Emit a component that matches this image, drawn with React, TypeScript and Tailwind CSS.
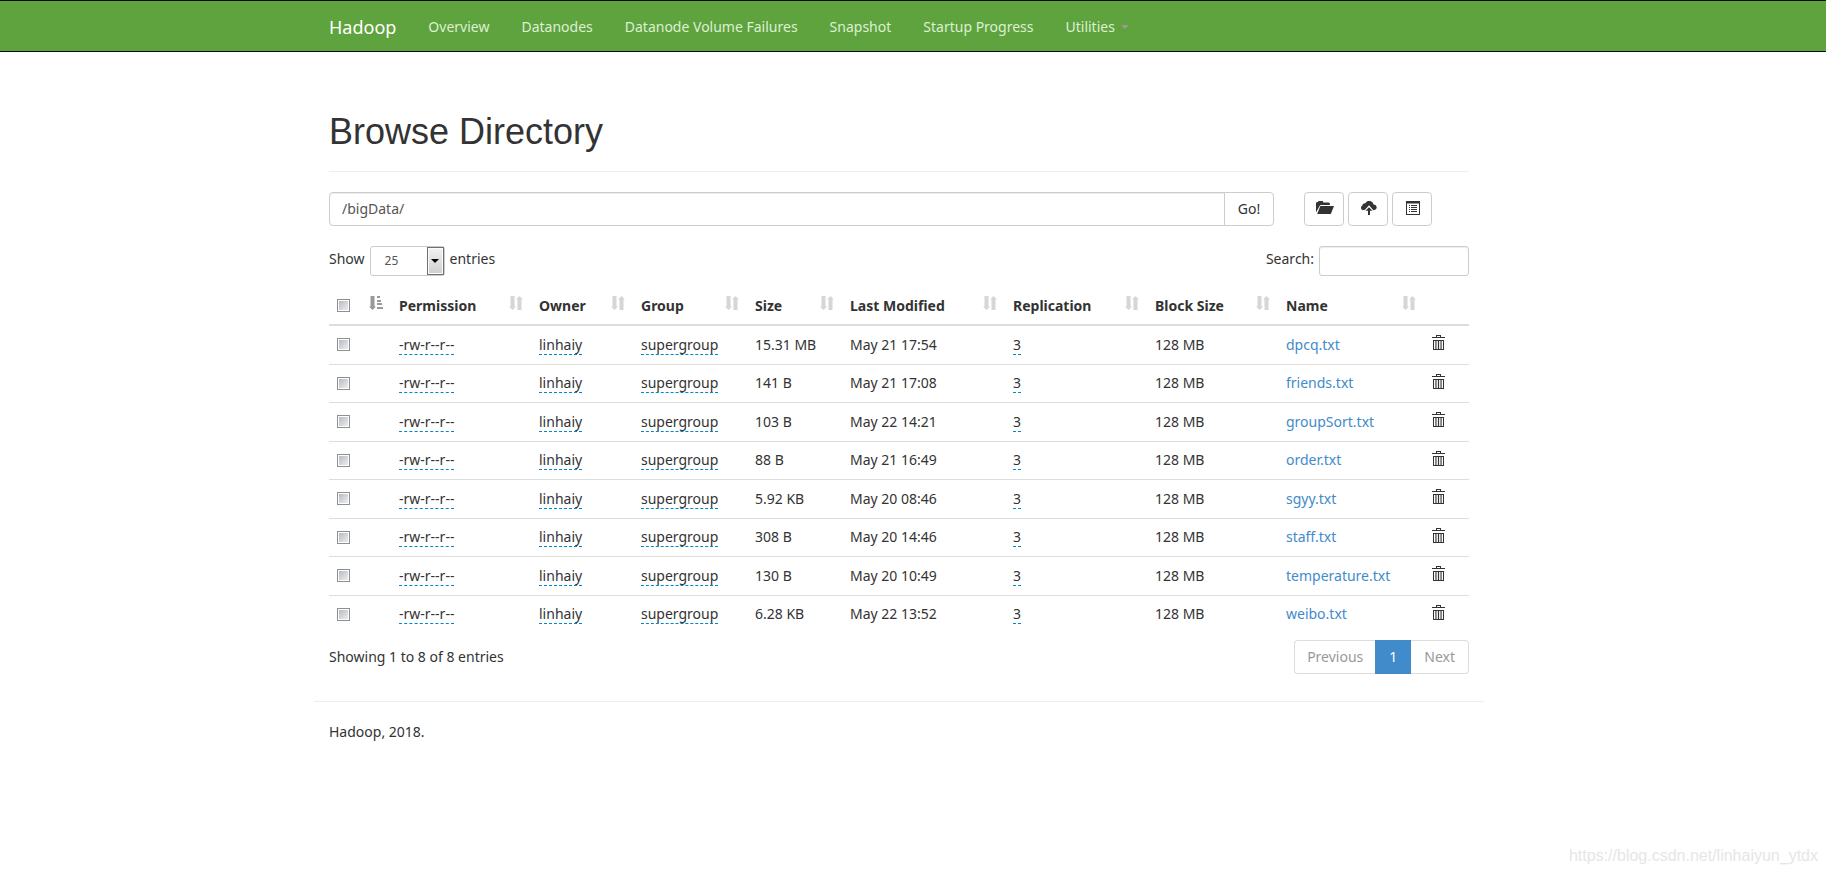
import React from "react";

const files = [
  ["15.31 MB", "May 21 17:54", "dpcq.txt"],
  ["141 B", "May 21 17:08", "friends.txt"],
  ["103 B", "May 22 14:21", "groupSort.txt"],
  ["88 B", "May 21 16:49", "order.txt"],
  ["5.92 KB", "May 20 08:46", "sgyy.txt"],
  ["308 B", "May 20 14:46", "staff.txt"],
  ["130 B", "May 20 10:49", "temperature.txt"],
  ["6.28 KB", "May 22 13:52", "weibo.txt"],
];

const columns = [
  { name: "Permission", width: "w-[140px]" },
  { name: "Owner", width: "w-[102px]" },
  { name: "Group", width: "w-[114px]" },
  { name: "Size", width: "w-[95px]" },
  { name: "Last Modified", width: "w-[163px]" },
  { name: "Replication", width: "w-[142px]" },
  { name: "Block Size", width: "w-[131px]" },
  { name: "Name", width: "w-[146px]" },
];

const navLinks = ["Overview", "Datanodes", "Datanode Volume Failures", "Snapshot", "Startup Progress"];

function SortIcon() {
  return (
    <svg viewBox="0 0 14 14" className="absolute right-2 bottom-3.5 size-3.5 fill-[#d6d6d6]" aria-hidden="true">
      <path d="M1.500 0h4v10.500H7L3.500 14 0 10.500h1.500zM8.500 14h4V3.500H14L10.500 0 7 3.500h1.500z" />
    </svg>
  );
}

function SortAscIcon() {
  return (
    <svg viewBox="0 0 14 14" className="absolute right-2 bottom-3.5 size-3.5 fill-[#999]" aria-hidden="true">
      <path d="M1.500 0h4v10.500H7L3.500 14 0 10.500h1.500zM8 0h3v2H8zM8 4h4v2H8zM8 7h5v2H8zM8 11h6v2H8z" />
    </svg>
  );
}

function FolderIcon() {
  return (
    <svg viewBox="0 0 18 14" className="h-3.5 w-[18px] fill-[#333]" aria-hidden="true">
      <path d="M0 11.500V2l1-1h1l.6-1h4l.8 1.500H13l.9.9V4H4.500L3.600 5z" />
      <path d="M4.300 5H18l-3.200 8H1.200z" />
    </svg>
  );
}

function UploadIcon() {
  return (
    <svg viewBox="0 0 16 14" className="h-3.5 w-4 fill-[#333]" aria-hidden="true">
      <path d="M4 8.800 1.900 9.200A2.500 2.500 0 0 1 1.400 4.500 2.400 2.400 0 0 1 4.400 2.300 4.300 4.300 0 0 1 12.500 3.400 2.900 2.900 0 0 1 14.200 8.800L12.400 9.200 8 4.300z" />
      <path d="M8 6.200 11.500 9.800H9V14H7V9.800H4.500z" />
    </svg>
  );
}

function ListIcon() {
  return (
    <svg viewBox="0 0 14 14" className="size-3.5 fill-[#333]" aria-hidden="true">
      <path fillRule="evenodd" d="M0 0h14v14H0zM1 2.500V13h12V2.500z" />
      <path d="M3 4h1v1H3zM5 4h6v1H5zM3 6h1v1H3zM5 6h6v1H5zM3 8h1v1H3zM5 8h6v1H5zM3 10h1v1H3zM5 10h6v1H5z" />
    </svg>
  );
}

function TrashIcon() {
  return (
    <svg viewBox="0 0 13 15" className="h-[15px] w-[13px] fill-[#333]" aria-hidden="true">
      <path
        fillRule="evenodd"
        d="M4 2V0h5v2h4v1H0V2zM5 1v1h3V1zM1 5h11v10H1zM2 6v8h1.400V6zM4.500 6v8h1.400V6zM7.100 6v8h1.400V6zM9.600 6v8H11V6z"
      />
    </svg>
  );
}

const checkbox =
  "block size-[13px] appearance-none border border-[#8e8f8f] bg-linear-to-br from-[#b0b6bf] to-[#f3f3f3] bg-clip-content p-px checked:from-[#428bca] checked:to-[#428bca]";
const editable = "inline-block border-b border-dashed border-[#0088cc] leading-[18px]";
const iconButton = "flex h-[34px] w-10 items-center justify-center rounded border border-[#ccc] bg-white pb-0.5 pl-0.5";

export default function App() {
  return (
    <div className="relative min-h-screen bg-white font-['Noto_Sans',sans-serif] text-sm leading-5 text-[#333]">
      <nav className="border-y border-[#080808] bg-[#5fa33e] pr-7">
        <div className="mx-auto flex h-[50px] max-w-[1170px] items-center px-[15px] pt-0.5">
          <a href="#" className="mr-4 text-lg leading-5 text-white">
            Hadoop
          </a>
          {navLinks.map((label) => (
            <a key={label} href="#" className="px-4 text-[#dcf0d3]">
              {label}
            </a>
          ))}
          <a href="#" className="flex items-center gap-1.5 px-4 text-[#dcf0d3]">
            Utilities
            <span className="border-x-4 border-t-4 border-x-transparent border-t-[#999]" />
          </a>
        </div>
      </nav>

      <div className="pr-7">
        <main className="mx-auto max-w-[1170px] px-[15px] pt-[60px]">
          <h1 className="border-b border-[#eee] pb-[19px] font-['Liberation_Sans',sans-serif] text-4xl leading-10">
            Browse Directory
          </h1>

          <div className="mt-5 flex">
            <input
              aria-label="Directory"
              defaultValue="/bigData/"
              className="h-[34px] min-w-0 flex-1 rounded-l border border-[#ccc] px-3 pb-0.5 text-[#555] shadow-[inset_0_1px_1px_rgba(0,0,0,0.075)]"
            />
            <button className="-ml-px h-[34px] w-[50px] rounded-r border border-[#ccc] bg-white">Go!</button>
            <div className="mr-[37px] ml-[30px] flex gap-1">
              <button aria-label="Create directory" className={iconButton}>
                <FolderIcon />
              </button>
              <button aria-label="Upload files" className={iconButton}>
                <UploadIcon />
              </button>
              <button aria-label="Cut and paste" className={iconButton}>
                <ListIcon />
              </button>
            </div>
          </div>

          <div className="mt-5 flex justify-between">
            <label className="flex items-start gap-[5px]">
              <span className="pt-[3px]">Show</span>
              <span className="relative flex">
                <select
                  defaultValue="25"
                  className="h-[30px] w-[75px] appearance-none rounded-[3px] border border-[#ccc] bg-white pl-3.5 text-xs text-[#555]"
                >
                  <option>25</option>
                  <option>50</option>
                  <option>100</option>
                </select>
                <span className="pointer-events-none absolute inset-y-px right-px flex w-[17px] items-center justify-center border border-[#707070] bg-linear-to-b from-[#f2f2f2] to-[#cfcfcf] shadow-[inset_0_0_0_1px_#fcfcfc]">
                  <span className="border-x-4 border-t-4 border-x-transparent border-t-black" />
                </span>
              </span>
              <span className="pt-[3px]">entries</span>
            </label>
            <label className="flex items-start gap-[5px]">
              <span className="pt-[3px]">Search:</span>
              <input
                type="search"
                className="h-[30px] w-[150px] rounded-[3px] border border-[#ccc] px-2.5 text-xs shadow-[inset_0_1px_1px_rgba(0,0,0,0.075)]"
              />
            </label>
          </div>

          <table className="mt-2 w-full table-fixed border-collapse text-left">
            <thead>
              <tr className="h-[41px] border-b-2 border-[#ddd]">
                <th className="w-[30px] px-2 pt-0.5">
                  <input type="checkbox" aria-label="Select all" className={checkbox} />
                </th>
                <th className="relative w-8" aria-label="Sort order">
                  <SortAscIcon />
                </th>
                {columns.map((column) => (
                  <th key={column.name} className={"relative pt-1 pl-2 font-bold " + column.width}>
                    {column.name}
                    <SortIcon />
                  </th>
                ))}
                <th aria-label="Actions" />
              </tr>
            </thead>
            <tbody>
              {files.map(([size, modified, name]) => (
                <tr key={name} className="border-b border-[#ddd] last:border-0 odd:h-[39px] even:h-[38px]">
                  <td className="px-2">
                    <input type="checkbox" aria-label={"Select " + name} className={checkbox} />
                  </td>
                  <td />
                  <td className="pl-2">
                    <span className={editable}>-rw-r--r--</span>
                  </td>
                  <td className="pl-2">
                    <span className={editable}>linhaiy</span>
                  </td>
                  <td className="pl-2">
                    <span className={editable}>supergroup</span>
                  </td>
                  <td className="pl-2">{size}</td>
                  <td className="pl-2">{modified}</td>
                  <td className="pl-2">
                    <span className={editable}>3</span>
                  </td>
                  <td className="pl-2">128 MB</td>
                  <td className="pl-2">
                    <a href="#" className="text-[#428bca]">
                      {name}
                    </a>
                  </td>
                  <td className="pb-1 pl-2">
                    <button aria-label={"Delete " + name} className="block">
                      <TrashIcon />
                    </button>
                  </td>
                </tr>
              ))}
            </tbody>
          </table>

          <div className="mt-[7px] flex justify-between">
            <p className="pt-[7px]">Showing 1 to 8 of 8 entries</p>
            <div className="flex h-[34px]">
              <button className="rounded-l border border-r-0 border-[#ddd] px-3 text-[#999]">Previous</button>
              <button className="border border-[#428bca] bg-[#428bca] px-[13px] text-white">1</button>
              <button className="rounded-r border border-l-0 border-[#ddd] px-[13px] text-[#999]">Next</button>
            </div>
          </div>
        </main>

        <footer className="mx-auto mt-[27px] max-w-[1170px] border-t border-[#eee] px-[15px] pt-5">
          <p>Hadoop, 2018.</p>
        </footer>
      </div>

      <p className="absolute right-2 bottom-[7px] font-['Liberation_Sans',sans-serif] text-base text-[#e6e6e6]">
        https://blog.csdn.net/linhaiyun_ytdx
      </p>
    </div>
  );
}
